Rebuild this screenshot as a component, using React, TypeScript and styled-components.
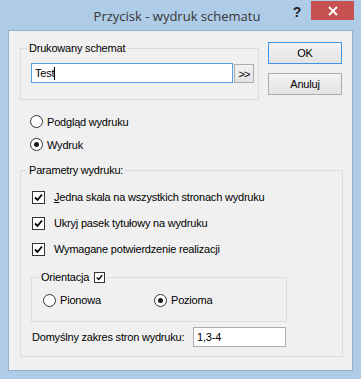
import styled, { createGlobalStyle } from "styled-components";

const GlobalStyle = createGlobalStyle`
  html, body {
    margin: 0;
    padding: 0;
  }
  body {
    width: 361px;
    height: 379px;
    overflow: hidden;
    background: #aecbe8;
    font-family: "Liberation Sans", Arial, sans-serif;
    font-size: 11px;
    letter-spacing: -0.2px;
    color: #000;
  }
  * {
    box-sizing: border-box;
  }
`;

const Window = styled.div`
  width: 361px;
  height: 379px;
  background: #aecbe8;
  display: flex;
  flex-direction: column;
  padding: 0 8px 8px;
`;

const TitleBar = styled.div`
  height: 30px;
  margin: 0 -8px;
  padding-right: 7px;
  display: grid;
  grid-template-columns: 1fr auto 1fr;
  align-items: start;
`;

const Title = styled.div`
  grid-column: 2;
  padding-top: 7px;
  font-family: "Open Sans", "Noto Sans", sans-serif;
  font-size: 13px;
  letter-spacing: 0;
  color: #363636;
  white-space: nowrap;
`;

const Controls = styled.div`
  grid-column: 3;
  justify-self: end;
  display: flex;
  align-items: flex-start;
`;

const HelpButton = styled.div`
  width: 26px;
  height: 20px;
  padding-top: 4px;
  margin-right: 1px;
  text-align: center;
  font-family: "Liberation Sans", Arial, sans-serif;
  font-weight: bold;
  font-size: 14px;
  color: #222;
`;

const CloseButton = styled.div`
  width: 43px;
  height: 19px;
  margin-top: 1px;
  background: #c75050;
  display: flex;
  align-items: center;
  justify-content: center;
`;

const Client = styled.div`
  flex: 1;
  background: #f0f0f0;
  border: 1px solid #94aecb;
  padding: 11px 10px 0 11px;
  display: flex;
  flex-direction: column;
`;

const TopRow = styled.div`
  display: flex;
  align-items: flex-start;
`;

const Group = styled.fieldset<{ $w: number; $h: number }>`
  width: ${(p) => p.$w}px;
  height: ${(p) => p.$h}px;
  margin: 0;
  padding: 0 0 0 10px;
  border: 1px solid #dcdcdc;
  min-inline-size: 0;
`;

const Caption = styled.legend<{ $left?: number }>`
  margin-left: ${(p) => p.$left ?? -4}px;
  padding: 0 2px;
  line-height: 13px;
  display: flex;
  align-items: center;
  gap: 5px;
`;

const ButtonColumn = styled.div`
  margin-left: 9px;
  display: flex;
  flex-direction: column;
  gap: 9px;
`;

const Button = styled.div<{ $default?: boolean }>`
  width: 74px;
  height: 22px;
  border: 1px solid ${(p) => (p.$default ? "#3c96e8" : "#adadad")};
  background: linear-gradient(#f3f3f3, #e3e3e3);
  display: flex;
  align-items: center;
  justify-content: center;
`;

const InputRow = styled.div`
  display: flex;
  align-items: flex-end;
  gap: 1px;
  margin-top: 8px;
`;

const TextBox = styled.div<{ $w: number; $focused?: boolean }>`
  width: ${(p) => p.$w}px;
  height: 20px;
  background: #fff;
  border: 1px solid ${(p) => (p.$focused ? "#569de5" : "#abadb3")};
  padding: 0 3px;
  display: flex;
  align-items: center;
  flex: none;
`;

const Caret = styled.span`
  display: inline-block;
  width: 1px;
  height: 13px;
  background: #000;
`;

const SmallButton = styled.div`
  width: 20px;
  height: 19px;
  border: 1px solid #adadad;
  background: linear-gradient(#f3f3f3, #e3e3e3);
  display: flex;
  align-items: center;
  justify-content: center;
  font-size: 11px;
  letter-spacing: -1px;
  flex: none;
`;

const RadioList = styled.div`
  margin-top: 10px;
  margin-left: 10px;
  display: flex;
  flex-direction: column;
`;

const OptionRow = styled.div<{ $h: number; $w?: number }>`
  height: ${(p) => p.$h}px;
  ${(p) => (p.$w ? `width: ${p.$w}px;` : "")}
  display: flex;
  align-items: center;
  gap: 4px;
  white-space: nowrap;
`;

const RadioCircle = styled.span<{ $on?: boolean }>`
  width: 13px;
  height: 13px;
  border-radius: 50%;
  border: 1px solid #333;
  background: #fff;
  display: flex;
  align-items: center;
  justify-content: center;
  flex: none;
  &::after {
    content: "";
    width: 5px;
    height: 5px;
    border-radius: 50%;
    background: ${(p) => (p.$on ? "#1a1a1a" : "transparent")};
  }
`;

const CheckBox = styled.span<{ $size: number }>`
  width: ${(p) => p.$size}px;
  height: ${(p) => p.$size}px;
  border: 1px solid #333;
  background: #fff;
  display: flex;
  align-items: center;
  justify-content: center;
  flex: none;
`;

const ParamsSection = styled.div`
  margin-top: 8px;
`;

const ParamsBody = styled.div`
  padding-top: 7px;
  display: flex;
  flex-direction: column;
`;

const CheckList = styled.div`
  padding-left: 1px;
  display: flex;
  flex-direction: column;
`;

const CheckLabel = styled.span`
  margin-left: 5px;
`;

const OrientGroupWrap = styled.div`
  margin-top: 9px;
`;

const OrientRadios = styled.div`
  margin-top: 6px;
  padding-left: 1px;
  display: flex;
`;

const RangeRow = styled.div`
  margin-top: 5px;
  padding-left: 1px;
  display: flex;
  align-items: center;
  justify-content: space-between;
  width: 255px;
`;

const Check = ({ size }: { size: number }) => (
  <CheckBox $size={size}>
    <svg width={size - 4} height={size - 4} viewBox="0 0 9 9">
      <path d="M1 4.5 L3.5 7 L8 1.5" fill="none" stroke="#000" strokeWidth="1.8" />
    </svg>
  </CheckBox>
);

export default function App() {
  return (
    <>
      <GlobalStyle />
      <Window>
        <TitleBar>
          <Title>Przycisk - wydruk schematu</Title>
          <Controls>
            <HelpButton>?</HelpButton>
            <CloseButton>
              <svg width="10" height="10" viewBox="0 0 10 10">
                <path d="M1 1 L9 9 M9 1 L1 9" stroke="#fff" strokeWidth="2" />
              </svg>
            </CloseButton>
          </Controls>
        </TitleBar>
        <Client>
          <TopRow>
            <Group $w={240} $h={58}>
              <Caption>Drukowany schemat</Caption>
              <InputRow>
                <TextBox $w={202} $focused>
                  Test
                  <Caret />
                </TextBox>
                <SmallButton>&gt;&gt;</SmallButton>
              </InputRow>
            </Group>
            <ButtonColumn>
              <Button $default>OK</Button>
              <Button>Anuluj</Button>
            </ButtonColumn>
          </TopRow>

          <RadioList>
            <OptionRow $h={23}>
              <RadioCircle />
              Podgląd wydruku
            </OptionRow>
            <OptionRow $h={23}>
              <RadioCircle $on />
              Wydruk
            </OptionRow>
          </RadioList>

          <ParamsSection>
            <Group $w={323} $h={193}>
              <Caption>Parametry wydruku:</Caption>
              <ParamsBody>
                <CheckList>
                  <OptionRow $h={26}>
                    <Check size={13} />
                    <CheckLabel>
                      <u>J</u>edna skala na wszystkich stronach wydruku
                    </CheckLabel>
                  </OptionRow>
                  <OptionRow $h={26}>
                    <Check size={13} />
                    <CheckLabel>Ukryj pasek tytułowy na wydruku</CheckLabel>
                  </OptionRow>
                  <OptionRow $h={26}>
                    <Check size={13} />
                    <CheckLabel>Wymagane potwierdzenie realizacji</CheckLabel>
                  </OptionRow>
                </CheckList>
                <OrientGroupWrap>
                  <Group $w={256} $h={51}>
                    <Caption $left={-3}>
                      Orientacja
                      <Check size={11} />
                    </Caption>
                    <OrientRadios>
                      <OptionRow $h={20} $w={111}>
                        <RadioCircle />
                        Pionowa
                      </OptionRow>
                      <OptionRow $h={20}>
                        <RadioCircle $on />
                        Pozioma
                      </OptionRow>
                    </OrientRadios>
                  </Group>
                </OrientGroupWrap>
                <RangeRow>
                  Domyślny zakres stron wydruku:
                  <TextBox $w={93}>1,3-4</TextBox>
                </RangeRow>
              </ParamsBody>
            </Group>
          </ParamsSection>
        </Client>
      </Window>
    </>
  );
}
